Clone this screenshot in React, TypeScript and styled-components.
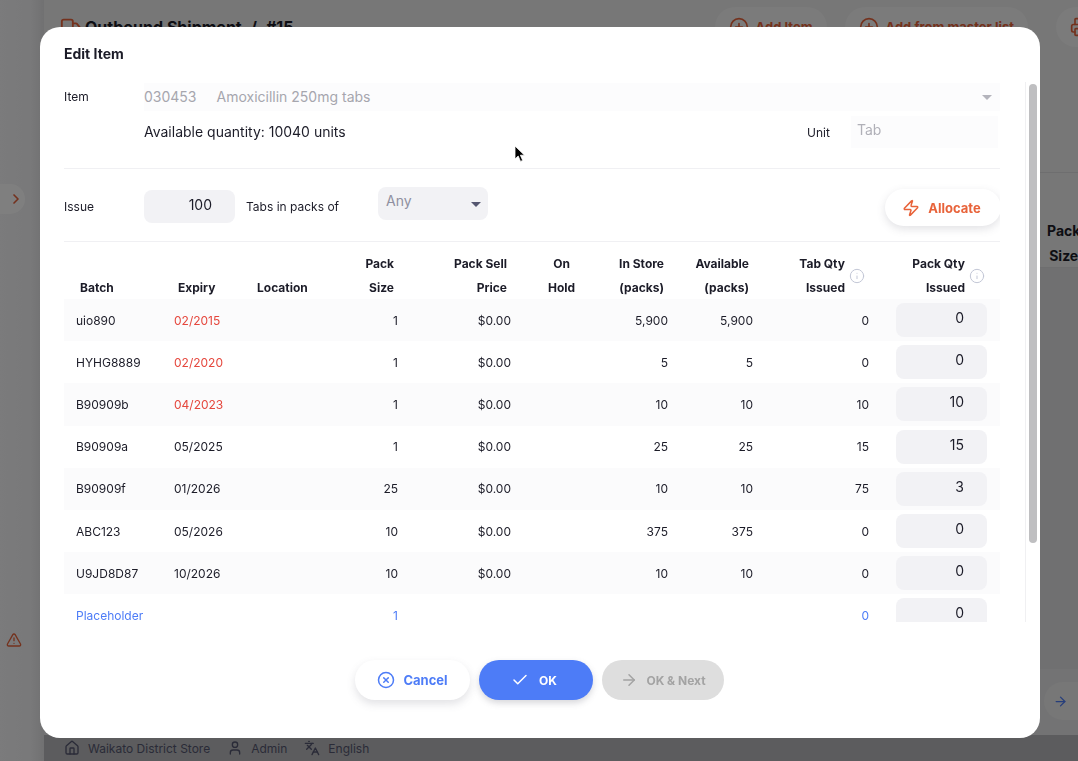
import React from 'react'
import styled, { createGlobalStyle } from 'styled-components'
import {
  ArrowRight,
  Check,
  ChevronRight,
  CirclePlus,
  CircleX,
  House,
  Info,
  Languages,
  Printer,
  TriangleAlert,
  Truck,
  User,
  Zap,
} from 'lucide-react'

const COLUMNS = '100px 81px 85px 80px 113px 77px 80px 85px 116px 119px'

const BLUE = '#4d7cf7'
const ORANGE = '#e8633a'
const DARK = '#1c1c28'

type Line = {
  batch: string
  expiry: string
  expired?: boolean
  packSize: number
  inStore?: string
  available?: string
  tabQty: number
  packQty: number
  placeholder?: boolean
}

const LINES: Line[] = [
  { batch: 'uio890', expiry: '02/2015', expired: true, packSize: 1, inStore: '5,900', available: '5,900', tabQty: 0, packQty: 0 },
  { batch: 'HYHG8889', expiry: '02/2020', expired: true, packSize: 1, inStore: '5', available: '5', tabQty: 0, packQty: 0 },
  { batch: 'B90909b', expiry: '04/2023', expired: true, packSize: 1, inStore: '10', available: '10', tabQty: 10, packQty: 10 },
  { batch: 'B90909a', expiry: '05/2025', packSize: 1, inStore: '25', available: '25', tabQty: 15, packQty: 15 },
  { batch: 'B90909f', expiry: '01/2026', packSize: 25, inStore: '10', available: '10', tabQty: 75, packQty: 3 },
  { batch: 'ABC123', expiry: '05/2026', packSize: 10, inStore: '375', available: '375', tabQty: 0, packQty: 0 },
  { batch: 'U9JD8D87', expiry: '10/2026', packSize: 10, inStore: '10', available: '10', tabQty: 0, packQty: 0 },
  { batch: 'Placeholder', expiry: '', packSize: 1, tabQty: 0, packQty: 0, placeholder: true },
]

export default function App() {
  return (
    <>
      <GlobalStyle />
      <Page>
        <Sidebar>
          <ExpandTab>
            <ChevronRight size={16} strokeWidth={2.5} />
          </ExpandTab>
          <SidebarAlert>
            <TriangleAlert size={16} />
          </SidebarAlert>
        </Sidebar>
        <Main>
          <AppBar>
            <Truck size={22} color={ORANGE} />
            <PageTitle>Outbound Shipment</PageTitle>
            <PageTitle>/</PageTitle>
            <PageTitle>#15</PageTitle>
            <AppBarActions>
              <AppBarButton>
                <CirclePlus size={20} />
                Add Item
              </AppBarButton>
              <AppBarButton>
                <CirclePlus size={20} />
                Add from master list
              </AppBarButton>
              <PrintButton>
                <Printer size={20} />
              </PrintButton>
            </AppBarActions>
          </AppBar>
          <Toolbar />
          <BackTableHead>
            <BackHeadLabel>
              Pack
              <br />
              Size
            </BackHeadLabel>
          </BackTableHead>
          <BackTableBody />
          <NextRow>
            <NextPill>
              <ArrowRight size={15} />
            </NextPill>
          </NextRow>
          <StatusBar>
            <StatusItem>
              <House size={16} />
              Waikato District Store
            </StatusItem>
            <StatusItem>
              <User size={16} />
              Admin
            </StatusItem>
            <StatusItem>
              <Languages size={16} />
              English
            </StatusItem>
          </StatusBar>
        </Main>
      </Page>

      <Backdrop>
        <Modal>
          <ModalTitle>Edit Item</ModalTitle>
          <ModalBody>
            <Scroller>
              <ItemRow>
                <FieldLabel>Item</FieldLabel>
                <ItemField>
                  <span>030453</span>
                  <span>Amoxicillin 250mg tabs</span>
                  <ItemCaret />
                </ItemField>
              </ItemRow>
              <QuantityRow>
                <Quantity>Available quantity: 10040 units</Quantity>
                <UnitLabel>Unit</UnitLabel>
                <UnitField>Tab</UnitField>
              </QuantityRow>
              <Divider />
              <IssueRow>
                <FieldLabel>Issue</FieldLabel>
                <IssueField>100</IssueField>
                <PacksLabel>Tabs in packs of</PacksLabel>
                <PackSelect>
                  Any
                  <SelectCaret />
                </PackSelect>
                <AllocateButton>
                  <Zap size={18} />
                  Allocate
                </AllocateButton>
              </IssueRow>
              <Divider />
              <HeadRow>
                <HeadCell $pad={16}>Batch</HeadCell>
                <HeadCell $pad={14}>Expiry</HeadCell>
                <HeadCell $pad={12}>Location</HeadCell>
                <HeadCell $align="right" $pad={16}>
                  Pack
                  <br />
                  Size
                </HeadCell>
                <HeadCell $align="right" $pad={16}>
                  Pack Sell
                  <br />
                  Price
                </HeadCell>
                <HeadCell $align="center">
                  On
                  <br />
                  Hold
                </HeadCell>
                <HeadCell $align="right" $pad={16}>
                  In Store
                  <br />
                  (packs)
                </HeadCell>
                <HeadCell $align="right" $pad={16}>
                  Available
                  <br />
                  (packs)
                </HeadCell>
                <InfoHeadCell $pad={16}>
                  <span>
                    Tab Qty
                    <br />
                    Issued
                  </span>
                  <Info size={16} strokeWidth={1.5} />
                </InfoHeadCell>
                <InfoHeadCell $pad={15}>
                  <span>
                    Pack Qty
                    <br />
                    Issued
                  </span>
                  <Info size={16} strokeWidth={1.5} />
                </InfoHeadCell>
              </HeadRow>
              {LINES.map((line, i) => (
                <BatchRow key={line.batch} $striped={i % 2 === 0} $placeholder={line.placeholder}>
                  <Cell $pad={12}>{line.batch}</Cell>
                  <Cell $pad={10} $expired={line.expired}>
                    {line.expiry}
                  </Cell>
                  <Cell />
                  <Cell $align="right" $pad={12}>
                    {line.packSize}
                  </Cell>
                  <Cell $align="right" $pad={12}>
                    {line.placeholder ? '' : '$0.00'}
                  </Cell>
                  <Cell />
                  <Cell $align="right" $pad={12}>
                    {line.inStore}
                  </Cell>
                  <Cell $align="right" $pad={12}>
                    {line.available}
                  </Cell>
                  <Cell $align="right" $pad={12}>
                    {line.tabQty}
                  </Cell>
                  <QtyCell>
                    <QtyField>{line.packQty}</QtyField>
                  </QtyCell>
                </BatchRow>
              ))}
            </Scroller>
            <ScrollRail>
              <ScrollThumb />
            </ScrollRail>
          </ModalBody>
          <ModalActions>
            <CancelButton>
              <CircleX size={18} />
              Cancel
            </CancelButton>
            <OkButton>
              <Check size={18} />
              OK
            </OkButton>
            <NextButton>
              <ArrowRight size={18} />
              OK &amp; Next
            </NextButton>
          </ModalActions>
          <Pointer viewBox="0 0 12 18" aria-hidden="true">
            <path
              d="M1 1v13l3.2-3 2.3 5.4 2.2-1-2.3-5.2H10.500z"
              fill="#000"
              stroke="#fff"
              strokeWidth="0.8"
            />
          </Pointer>
        </Modal>
      </Backdrop>
    </>
  )
}

const GlobalStyle = createGlobalStyle`
  html, body {
    margin: 0;
    height: 100%;
    overflow: hidden;
    font-family: Inter, 'Liberation Sans', sans-serif;
    color: ${DARK};
  }
`

const Page = styled.div`
  display: flex;
  width: 1078px;
  height: 761px;
  overflow: hidden;
  background: #eeeeee;
`

const Sidebar = styled.aside`
  flex: 0 0 44px;
  display: flex;
  flex-direction: column;
  padding-top: 184px;
  background: linear-gradient(90deg, #f6f6f8 0%, #f2f2f4 70%, #e2e2e4 100%);
`

const ExpandTab = styled.div`
  width: 25px;
  height: 30px;
  display: flex;
  align-items: center;
  justify-content: flex-end;
  padding-right: 1px;
  box-sizing: border-box;
  border-radius: 0 15px 15px 0;
  background: #ffffff;
  color: ${ORANGE};
`

const SidebarAlert = styled.div`
  margin-top: 418px;
  padding-left: 6px;
  color: ${ORANGE};
`

const Main = styled.main`
  flex: 1;
  min-width: 0;
  display: flex;
  flex-direction: column;
`

const AppBar = styled.header`
  flex: 0 0 54px;
  display: flex;
  align-items: center;
  gap: 9px;
  padding-left: 16px;

  > svg {
    flex: none;
    margin-right: -6px;
  }
`

const PageTitle = styled.span`
  font-size: 16px;
  font-weight: 700;
  color: ${DARK};
  white-space: nowrap;
`

const AppBarActions = styled.div`
  margin-left: auto;
  margin-right: -26px;
  display: flex;
  align-items: center;
  gap: 18px;
`

const AppBarButton = styled.div`
  height: 40px;
  display: flex;
  align-items: center;
  gap: 7px;
  padding: 0 14px;
  border-radius: 20px;
  background: #f6f6f6;
  font-size: 13px;
  font-weight: 700;
  color: ${ORANGE};
  white-space: nowrap;
`

const PrintButton = styled(AppBarButton)`
  margin-left: 10px;
`

const Toolbar = styled.div`
  flex: 0 0 118px;
  border-bottom: 1px solid #dcdcde;
`

const BackTableHead = styled.div`
  flex: none;
  padding: 45px 0 0 1003px;
  height: 49px;
  background: #eeeeee;
  border-bottom: 1px solid #dcdcde;
`

const BackHeadLabel = styled.div`
  display: inline-block;
  font-size: 14px;
  font-weight: 700;
  line-height: 25px;
  text-align: center;
  white-space: nowrap;
`

const BackTableBody = styled.div`
  flex: 0 0 401px;
  background: #e0e0e2;
`

const NextRow = styled.div`
  flex: 0 0 66px;
  display: flex;
  align-items: center;
  padding-left: 1000px;
  background: #e6e6e8;
  color: ${BLUE};
`

const NextPill = styled.div`
  flex: 0 0 120px;
  height: 38px;
  display: flex;
  align-items: center;
  padding-left: 9px;
  box-sizing: border-box;
  margin-top: -2px;
  border-radius: 19px;
  background: #eeeeee;
`

const StatusBar = styled.footer`
  flex: 1;
  display: flex;
  align-items: center;
  gap: 17px;
  padding-left: 20px;
  background: #b8b8bc;
`

const StatusItem = styled.div`
  display: flex;
  align-items: center;
  gap: 8px;
  font-size: 12px;
  color: #555770;
  white-space: nowrap;
`

const Backdrop = styled.div`
  position: fixed;
  inset: 0;
  display: flex;
  box-sizing: border-box;
  padding: 27px 38px 23px 40px;
  background: rgba(0, 0, 0, 0.5);
`

const Modal = styled.div`
  position: relative;
  flex: 1;
  display: flex;
  flex-direction: column;
  border-radius: 20px;
  background: #ffffff;
  overflow: hidden;
`

const ModalTitle = styled.h2`
  flex: 0 0 55px;
  margin: 0;
  padding-left: 24px;
  font-size: 14px;
  font-weight: 700;
  line-height: 54px;
  color: ${DARK};
`

const ModalBody = styled.div`
  flex: 0 0 540px;
  display: flex;
  padding-left: 24px;
`

const Scroller = styled.div`
  flex: 0 0 936px;
  height: 540px;
  padding-top: 1px;
  box-sizing: border-box;
  overflow: hidden;
`

const ScrollRail = styled.div`
  margin-left: 25px;
  flex: 0 0 15px;
  box-sizing: border-box;
  padding: 2px 3px 0 3px;
  border-left: 1px solid #f0f0f2;
`

const ScrollThumb = styled.div`
  width: 8px;
  height: 459px;
  border-radius: 4px;
  background: #bfbfc1;
`

const ItemRow = styled.div`
  display: flex;
  align-items: center;
  height: 28px;
`

const FieldLabel = styled.div`
  flex: 0 0 80px;
  padding-bottom: 1px;
  font-size: 12px;
  color: ${DARK};
`

const ItemField = styled.div`
  position: relative;
  flex: 1;
  height: 28px;
  box-sizing: border-box;
  padding-bottom: 2px;
  display: flex;
  align-items: center;
  gap: 20px;
  background: #fcfcfd;
  font-size: 14px;
  color: #a6a6ae;
`

const ItemCaret = styled.i`
  position: absolute;
  right: 8px;
  top: 12px;
  border-style: solid;
  border-width: 5px 5.5px 0;
  border-color: #b4b4bc transparent transparent;
`

const QuantityRow = styled.div`
  display: flex;
  align-items: center;
  height: 32px;
  margin: 5px 0 20px;
  padding: 0 2px 0 80px;
`

const Quantity = styled.div`
  flex: 1;
  padding-bottom: 1px;
  font-size: 14px;
  color: ${DARK};
`

const UnitLabel = styled.div`
  flex: 0 0 44px;
  font-size: 12px;
  color: ${DARK};
`

const UnitField = styled.div`
  flex: 0 0 147px;
  box-sizing: border-box;
  height: 32px;
  padding-left: 6px;
  line-height: 28px;
  font-size: 14px;
  color: #b0b0b8;
  background: #fcfcfd;
`

const Divider = styled.div`
  height: 1px;
  background: #f0f0f3;
`

const IssueRow = styled.div`
  display: flex;
  align-items: center;
  height: 39px;
  padding: 18px 0 15px;
`

const IssueField = styled.div`
  flex: 0 0 91px;
  box-sizing: border-box;
  height: 33px;
  padding-right: 23px;
  border-radius: 8px;
  background: #f2f2f5;
  font-size: 14px;
  line-height: 29px;
  text-align: right;
  color: ${DARK};
`

const PacksLabel = styled.div`
  flex: 0 0 143px;
  padding-left: 11px;
  padding-bottom: 1px;
  box-sizing: border-box;
  font-size: 12px;
  color: ${DARK};
`

const PackSelect = styled.div`
  position: relative;
  flex: 0 0 110px;
  box-sizing: border-box;
  height: 33px;
  margin-bottom: 6px;
  padding-left: 8px;
  border-radius: 8px;
  background: #f2f2f5;
  font-size: 14px;
  line-height: 28px;
  color: #8f90a0;
`

const SelectCaret = styled.i`
  position: absolute;
  right: 7px;
  top: 15px;
  border-style: solid;
  border-width: 5px 5.5px 0;
  border-color: #555770 transparent transparent;
`

const AllocateButton = styled.div`
  margin: 2px -1px 0 auto;
  flex: 0 0 116px;
  height: 37px;
  box-sizing: border-box;
  padding-right: 3px;
  display: flex;
  align-items: center;
  justify-content: center;
  gap: 8px;
  border-radius: 19px;
  background: #ffffff;
  box-shadow: 0 3px 8px rgba(96, 97, 112, 0.18);
  font-size: 13px;
  font-weight: 700;
  color: ${ORANGE};
`

const HeadRow = styled.div`
  display: grid;
  grid-template-columns: ${COLUMNS};
  box-sizing: border-box;
  height: 58px;
  margin-bottom: -1px;
  padding-top: 9px;
`

const HeadCell = styled.div<{ $align?: string; $pad?: number }>`
  align-self: end;
  font-size: 12px;
  font-weight: 700;
  line-height: 24px;
  color: ${DARK};
  white-space: nowrap;
  text-align: ${(p) => p.$align ?? 'left'};
  padding-${(p) => (p.$align === 'right' ? 'right' : 'left')}: ${(p) => p.$pad ?? 0}px;
`

const InfoHeadCell = styled(HeadCell)`
  display: flex;
  align-items: center;
  justify-content: flex-end;
  gap: 4px;
  text-align: right;
  padding-left: 0;
  padding-right: ${(p) => p.$pad ?? 0}px;

  svg {
    flex: none;
    color: #c3c7d6;
  }
`

const BatchRow = styled.div<{ $striped: boolean; $placeholder?: boolean }>`
  display: grid;
  grid-template-columns: ${COLUMNS};
  align-items: center;
  height: 42.2px;
  font-size: 12px;
  color: ${(p) => (p.$placeholder ? BLUE : DARK)};
  background: ${(p) => (p.$striped ? '#fbfbfc' : '#ffffff')};
`

const Cell = styled.div<{ $align?: string; $pad?: number; $expired?: boolean }>`
  text-align: ${(p) => p.$align ?? 'left'};
  padding-${(p) => (p.$align === 'right' ? 'right' : 'left')}: ${(p) => p.$pad ?? 0}px;
  color: ${(p) => (p.$expired ? '#e5473d' : 'inherit')};
  white-space: nowrap;
`

const QtyCell = styled.div`
  padding-left: 15px;
`

const QtyField = styled.div`
  width: 91px;
  height: 34px;
  box-sizing: border-box;
  padding-right: 23px;
  border-radius: 8px;
  background: #f2f2f5;
  font-size: 14px;
  line-height: 30px;
  text-align: right;
  color: ${DARK};
`

const ModalActions = styled.div`
  display: flex;
  justify-content: center;
  gap: 9px;
  padding: 38px 1px 0 0;
`

const ActionButton = styled.div`
  height: 40px;
  box-sizing: border-box;
  display: flex;
  align-items: center;
  justify-content: center;
  gap: 8px;
  border-radius: 20px;
  font-size: 12px;
  font-weight: 700;
  white-space: nowrap;
`

const CancelButton = styled(ActionButton)`
  width: 115px;
  font-size: 13px;
  background: #ffffff;
  color: ${BLUE};
  box-shadow: 0 4px 8px rgba(96, 97, 112, 0.18);
`

const OkButton = styled(ActionButton)`
  width: 114px;
  gap: 10px;
  padding-right: 4px;
  background: ${BLUE};
  color: #ffffff;
  box-shadow: 0 3px 6px rgba(96, 97, 112, 0.25);
`

const NextButton = styled(ActionButton)`
  width: 122px;
  background: #dedede;
  color: #a3a3a3;
`

const Pointer = styled.svg`
  position: absolute;
  left: 474px;
  top: 118px;
  width: 12px;
  height: 18px;
`
